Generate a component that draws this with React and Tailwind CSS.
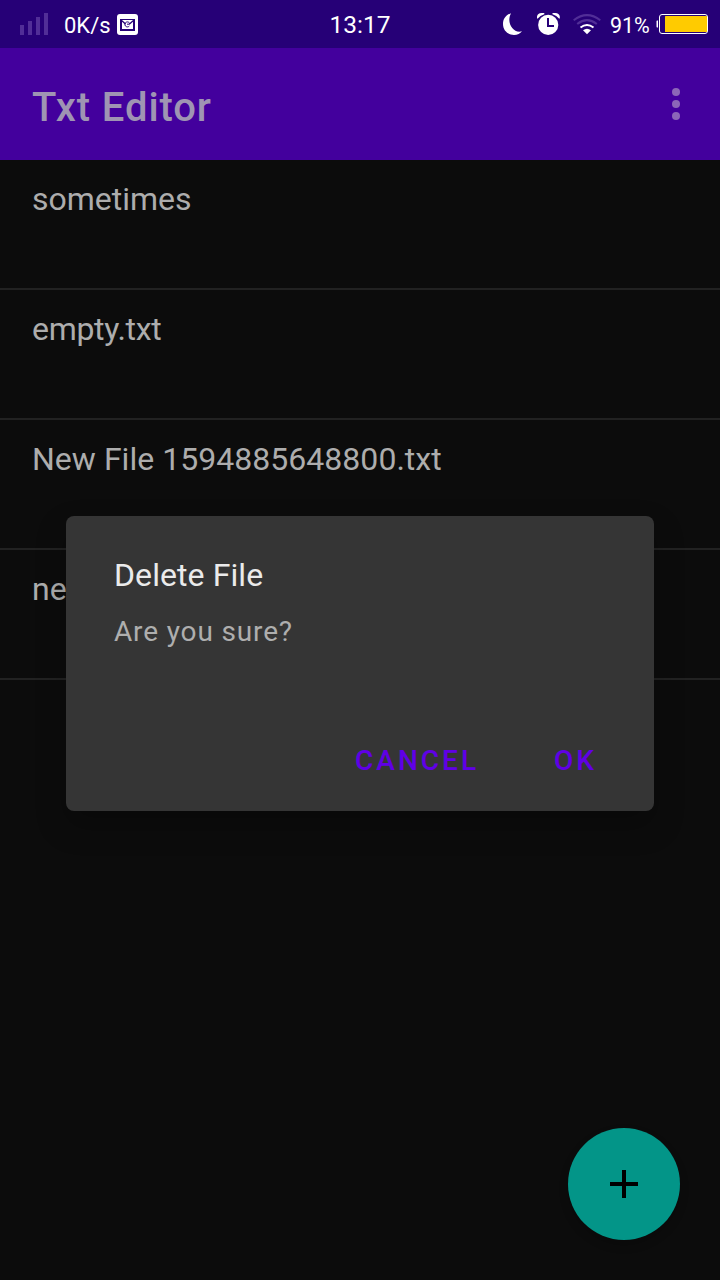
import React from "react";

const files = [
  { name: "sometimes", tracking: "tracking-normal" },
  { name: "empty.txt", tracking: "tracking-[-0.3px]" },
  { name: "New File 1594885648800.txt", tracking: "tracking-[0.03px]" },
  { name: "new", tracking: "tracking-normal" },
];

function SignalIcon() {
  return (
    <svg className="ml-5 h-12 w-7 shrink-0" viewBox="0 0 28 48" fill="#512e97">
      <path d="M0 25h4v10H0zM8 21h4v14H8zM16 17h4v18h-4zM24 13h4v22h-4z" />
    </svg>
  );
}

function MailIcon() {
  return (
    <svg className="h-12 w-[21px] shrink-0" viewBox="0 0 21 48" fill="none">
      <rect x="0" y="14" width="21" height="21" rx="3" fill="#fff" />
      <g stroke="#260077">
        <path d="M4 19v11h13V19" strokeWidth="2" />
        <path d="M3 19.500h15" strokeWidth="1" />
        <path d="M4 20l4.500 4M17 20l-4.500 4" strokeWidth="1.300" />
        <path d="M12.800 23.800A2.500 2.500 0 1 0 12.300 26M10 24.200h2.800" strokeWidth="1" />
      </g>
    </svg>
  );
}

function MoonIcon() {
  return (
    <svg className="h-12 w-5 shrink-0" viewBox="0 0 20 48" fill="#fff">
      <path d="M8 13.200C2.800 15 0 19 0 24C0 30.300 4.900 35 11 35C14.500 35 17.200 33.700 19 31.300C10.500 34 2.800 23 8 13.200Z" />
    </svg>
  );
}

function AlarmIcon() {
  return (
    <svg className="h-12 w-6 shrink-0" viewBox="0 0 24 48" fill="none">
      <circle cx="11.200" cy="24.900" r="10.100" fill="#fff" />
      <path d="M0 18.600V16.500Q.6 13 4.500 13H7.300V14.200Q3 15.500 .8 18.600ZM22.800 18.600V16.500Q22.200 13 18.300 13H15.500V14.200Q19.800 15.500 22 18.600Z" fill="#fff" />
      <path d="M11 18v8h6" stroke="#260077" strokeWidth="2" />
    </svg>
  );
}

function WifiIcon() {
  return (
    <svg className="h-12 w-7 shrink-0" viewBox="0 0 28 48" fill="none">
      <path d="M.7 20.300Q14 10 27.300 20.300M4.200 24Q14 16.300 23.800 24" stroke="#512e97" strokeWidth="2" />
      <path d="M7.500 27.500Q14 22.600 20.500 27.500" stroke="#fff" strokeWidth="2" />
      <path d="M10 30.300Q14 27.200 18 30.300L14 34.200Z" fill="#fff" />
    </svg>
  );
}

function BatteryIcon() {
  return (
    <svg className="h-12 w-[52px] shrink-0" viewBox="0 0 52 48" fill="none">
      <path d="M2 20.500H1.200Q.5 20.500 .5 21.500V26.500Q.5 27.500 1.200 27.500H2Z" fill="#fff" />
      <rect x="3.500" y="14.500" width="48" height="19" rx="2.500" stroke="#fff" />
      <rect x="9" y="16" width="42" height="16" rx=".5" fill="#ffcb00" />
    </svg>
  );
}

function StatusBar() {
  return (
    <div className="grid h-12 grid-cols-[329px_62px_329px] items-center bg-[#260077] text-white">
      <div className="flex items-center">
        <SignalIcon />
        <span className="ml-4 w-[53px] whitespace-nowrap pt-[3px] text-[22px] leading-7">0K/s</span>
        <MailIcon />
      </div>
      <span className="whitespace-nowrap pt-0.5 text-center text-[24.500px] leading-7">13:17</span>
      <div className="flex items-center pl-[112px]">
        <MoonIcon />
        <div className="ml-[14px] flex items-center gap-3">
          <AlarmIcon />
          <WifiIcon />
        </div>
        <span className="ml-[9px] w-[46px] whitespace-nowrap pt-[3px] text-[21.500px] leading-7 tracking-[-0.1px]">91%</span>
        <BatteryIcon />
      </div>
    </div>
  );
}

export default function App() {
  return (
    <div className="relative flex h-[1280px] w-[720px] flex-col overflow-hidden bg-[#0c0c0c] font-['Roboto',sans-serif]">
      <StatusBar />
      <header className="flex h-28 items-center justify-between bg-[#43009d] pl-8 pr-10">
        <h1 className="pt-[7px] text-[40px] font-medium leading-[48px] tracking-[0.900px] text-[#9f94b3]">Txt Editor</h1>
        <svg className="h-8 w-2" viewBox="0 0 8 32" fill="#8c66b8">
          <circle cx="4" cy="4" r="4" />
          <circle cx="4" cy="16" r="4" />
          <circle cx="4" cy="28" r="4" />
        </svg>
      </header>
      <ul>
        {files.map(({ name, tracking }) => (
          <li key={name} className={`h-[130px] border-b-2 border-[#222222] px-8 pt-[19px] text-[32px] leading-10 text-[#adadad] ${tracking}`}>
            {name}
          </li>
        ))}
      </ul>
      <div className="absolute left-[66px] top-[516px] flex h-[295px] w-[588px] flex-col rounded-lg bg-[#353535] px-12 pt-10 shadow-[0_14px_30px_rgba(0,0,0,0.25)]">
        <h2 className="text-[32px] leading-[38px] tracking-[0.080px] text-[#ebebeb]">Delete File</h2>
        <p className="mt-5 text-[28px] leading-9 tracking-[0.850px] text-[#aeaeae]">Are you sure?</p>
        <div className="mt-[93px] flex justify-end gap-[75px] pr-[9px] text-[28px] font-medium leading-9 tracking-[3px] text-[#6000e6]">
          <button>CANCEL</button>
          <button>OK</button>
        </div>
      </div>
      <button aria-label="Add file" className="absolute bottom-10 right-10 flex size-28 items-center justify-center rounded-full bg-[#039588] shadow-[0_5px_10px_rgba(0,0,0,0.2)]">
        <svg className="size-7" viewBox="0 0 28 28">
          <path d="M12 0h4v12h12v4H16v12h-4V16H0v-4h12z" />
        </svg>
      </button>
    </div>
  );
}
